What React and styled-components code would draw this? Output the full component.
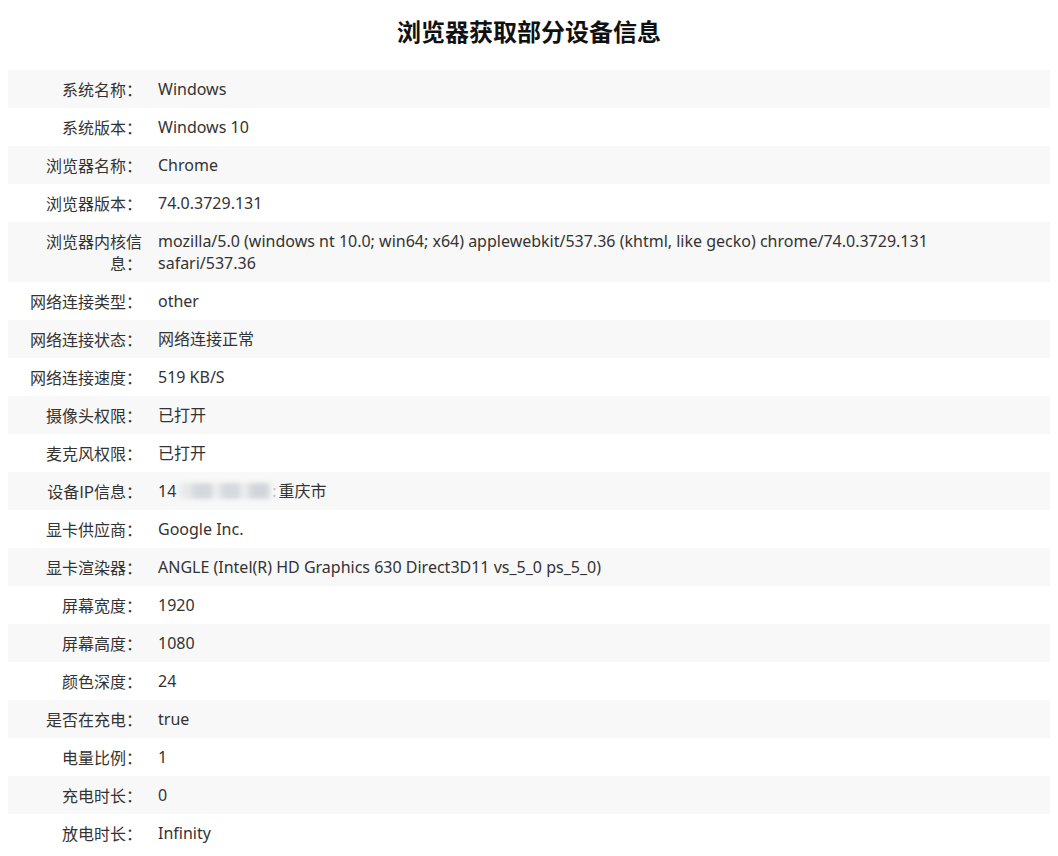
import React from "react";
import styled, { createGlobalStyle } from "styled-components";

const Global = createGlobalStyle`
  body {
    margin: 8px;
    background: #fff;
    font-family: "Noto Sans", "Noto Sans CJK SC", sans-serif;
    color: #333;
  }
`;

const Title = styled.h1`
  margin: 7px 0 23px;
  font-size: 24px;
  line-height: 32px;
  font-weight: 700;
  text-align: center;
  color: #111;
  font-family: "Noto Sans CJK SC", sans-serif;
`;

const Table = styled.div`
  display: flex;
  flex-direction: column;
`;

const Row = styled.div`
  display: grid;
  grid-template-columns: 142px 1fr;
  align-items: center;
  min-height: 38px;
  padding: 8px 0;
  box-sizing: border-box;
  background: ${(p) => (p.$odd ? "#f8f8f8" : "#fff")};
  font-size: 16px;
  line-height: 22px;
`;

const Label = styled.div`
  padding: 0 8px 0 18px;
  text-align: right;
  font-family: "Noto Sans CJK SC", sans-serif;
  color: #333;
`;

const Value = styled.div`
  padding: 0 60px 0 8px;
  color: #333;
`;

const Blur = styled.span`
  display: inline-block;
  vertical-align: middle;
  width: 94px;
  height: 16px;
  margin: -3px 0 0 2px;
  background: linear-gradient(
    90deg,
    #eef0f1 0%,
    #e4e6e8 12%,
    #d4d8dc 20%,
    #d4d8dc 33%,
    #eef0f1 40%,
    #d6d9dd 50%,
    #d6d9dd 63%,
    #eef0f1 70%,
    #d2d6da 80%,
    #d2d6da 94%,
    #f2f3f4 100%
  );
  filter: blur(2px);
`;

const Faint = styled.span`
  color: #bbb;
  margin-right: 2px;
`;

const rows = [
  ["系统名称：", "Windows"],
  ["系统版本：", "Windows 10"],
  ["浏览器名称：", "Chrome"],
  ["浏览器版本：", "74.0.3729.131"],
  [
    "浏览器内核信息：",
    "mozilla/5.0 (windows nt 10.0; win64; x64) applewebkit/537.36 (khtml, like gecko) chrome/74.0.3729.131 safari/537.36",
  ],
  ["网络连接类型：", "other"],
  ["网络连接状态：", "网络连接正常"],
  ["网络连接速度：", "519 KB/S"],
  ["摄像头权限：", "已打开"],
  ["麦克风权限：", "已打开"],
  ["设备IP信息：", "ip"],
  ["显卡供应商：", "Google Inc."],
  ["显卡渲染器：", "ANGLE (Intel(R) HD Graphics 630 Direct3D11 vs_5_0 ps_5_0)"],
  ["屏幕宽度：", "1920"],
  ["屏幕高度：", "1080"],
  ["颜色深度：", "24"],
  ["是否在充电：", "true"],
  ["电量比例：", "1"],
  ["充电时长：", "0"],
  ["放电时长：", "Infinity"],
];

export default function App() {
  return (
    <>
      <Global />
      <Title>浏览器获取部分设备信息</Title>
      <Table>
        {rows.map(([k, v], i) => (
          <Row key={k} $odd={i % 2 === 0}>
            <Label>{k}</Label>
            <Value>
              {v === "ip" ? (
                <>
                  14
                  <Blur />
                  <Faint>:</Faint>重庆市
                </>
              ) : (
                v
              )}
            </Value>
          </Row>
        ))}
      </Table>
    </>
  );
}
